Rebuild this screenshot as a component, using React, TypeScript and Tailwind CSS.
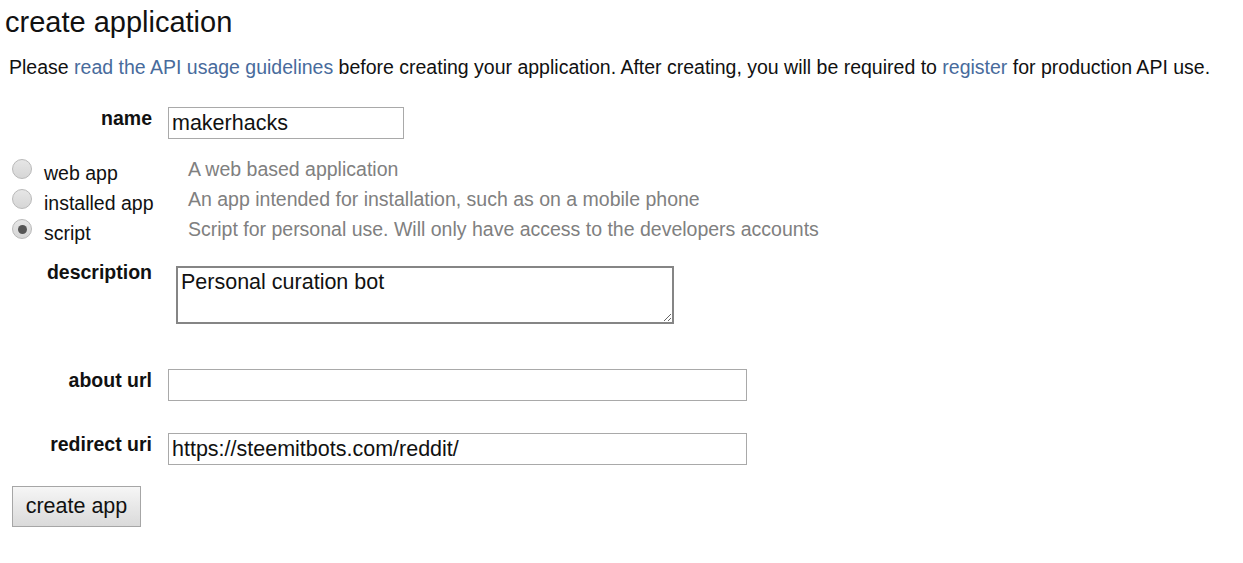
const font = { fontFamily: '"Liberation Sans", Arial, sans-serif' }

function Radio({ checked }: { checked?: boolean }) {
  return (
    <span className="flex h-[20px] w-[20px] items-center justify-center rounded-full border border-[#b9b9b9] bg-gradient-to-b from-[#e6e6e6] to-[#d6d6d6]">
      {checked && <span className="h-[9px] w-[9px] rounded-full bg-[#555]" />}
    </span>
  )
}

const kinds = [
  { label: "web app", desc: "A web based application" },
  { label: "installed app", desc: "An app intended for installation, such as on a mobile phone" },
  { label: "script", desc: "Script for personal use. Will only have access to the developers accounts", checked: true },
]

function Label({ children }: { children: string }) {
  return (
    <label className="w-[152px] shrink-0 text-right text-[19.5px] leading-[22px] font-bold text-[#111]">{children}</label>
  )
}

export default function App() {
  return (
    <div className="min-h-screen bg-white text-[#111]" style={font}>
      <h1 className="pl-[5px] pt-[3px] text-[29px] leading-[38px]">create application</h1>
      <p className="mt-[14px] pl-[9px] text-[19.5px] leading-[24px]">
        Please <a className="text-[#486b9c]">read the API usage guidelines</a> before creating your application. After
        creating, you will be required to <a className="text-[#486b9c]">register</a> for production API use.
      </p>

      <div className="mt-[28px] flex items-start gap-[16px]">
        <Label>name</Label>
        <input
          readOnly
          value="makerhacks"
          className="h-[32px] w-[236px] border border-[#a9a9a9] px-[3px] text-[21.5px] outline-none"
        />
      </div>

      <div className="mt-[20px] flex flex-col pl-[12px]">
        {kinds.map((k) => (
          <div key={k.label} className="flex h-[30px] items-start">
            <span className="w-[32px]">
              <Radio checked={k.checked} />
            </span>
            <span className="mt-[4px] w-[144px] text-[19.5px] leading-[20px]">{k.label}</span>
            <span className="text-[19.5px] leading-[20px] text-[#808080]">{k.desc}</span>
          </div>
        ))}
      </div>

      <div className="mt-[12px] flex items-start gap-[24px]">
        <Label>description</Label>
        <textarea
          readOnly
          value="Personal curation bot"
          className="mt-[5px] h-[58px] w-[498px] resize-y border-2 border-[#858585] px-[3px] pt-[3px] pb-0 text-[21.5px] leading-[22px] outline-none"
        />
      </div>

      <div className="mt-[45px] flex items-start gap-[16px]">
        <Label>about url</Label>
        <input readOnly className="h-[32px] w-[579px] border border-[#a9a9a9] px-[3px] text-[21.5px] outline-none" />
      </div>

      <div className="mt-[32px] flex items-start gap-[16px]">
        <Label>redirect uri</Label>
        <input
          readOnly
          value="https://steemitbots.com/reddit/"
          className="h-[32px] w-[579px] border border-[#a9a9a9] px-[3px] text-[21.5px] outline-none"
        />
      </div>

      <div className="mt-[21px] pl-[12px]">
        <button className="h-[41px] w-[129px] border border-[#a6a6a6] bg-gradient-to-b from-[#f6f6f6] to-[#dadada] text-[21.5px]">
          create app
        </button>
      </div>
    </div>
  )
}
